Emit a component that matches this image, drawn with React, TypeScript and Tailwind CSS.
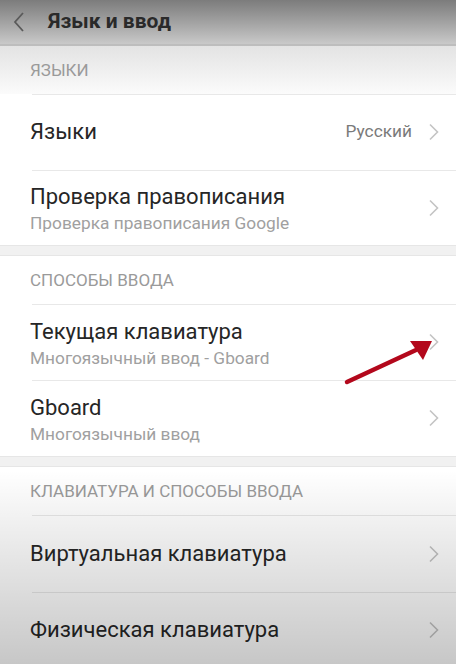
import React from "react";

const Chevron = () => (
  <svg width="12" height="18" viewBox="0 0 12 18" className="shrink-0">
    <path d="M2 1.5 L9.5 9 L2 16.5" fill="none" stroke="#c4c4c4" strokeWidth="1.6" />
  </svg>
);

type Row = { title: string; sub?: string; value?: string };

const SectionHeader = ({ label, top }: { label: string; top?: boolean }) => (
  <div
    className={`h-[48px] flex items-center pl-[30px] pt-[2px] text-[17px] text-[#9a9a9a] uppercase ${
      top ? "bg-gradient-to-b from-[#e3e3e3] to-[#fbfbfb]" : "bg-white"
    }`}
  >
    {label}
  </div>
);

const SettingRow = ({ row, h = "h-[76px]" }: { row: Row; h?: string }) => (
  <div className="relative bg-white">
    <div className="absolute top-0 left-[32px] right-0 h-px bg-[#e8e8e8]" />
    <div className={`${h} flex items-center pl-[30px] pr-[16px]`}>
      <div className={`flex-1 flex flex-col ${row.sub ? "pt-[3px]" : ""}`}>
        <span className="text-[22px] leading-[28px] text-[#262626]">{row.title}</span>
        {row.sub && (
          <span className="text-[17.3px] leading-[24px] text-[#a0a0a0]">{row.sub}</span>
        )}
      </div>
      {row.value && <span className="text-[17.3px] text-[#7a7a7a] mr-[16px]">{row.value}</span>}
      <Chevron />
    </div>
  </div>
);

const Band = () => (
  <div className="h-[11px] bg-[#f1f1f1] border-t border-b border-[#e6e6e6]" />
);

export default function App() {
  return (
    <div
      className="relative w-[456px] h-[664px] overflow-hidden bg-white"
      style={{ fontFamily: "Roboto, 'Noto Sans', sans-serif" }}
    >
      <div className="h-[44px] flex items-center bg-gradient-to-b from-[#7c7c7c] to-[#c9c9c9]">
        <svg width="14" height="22" viewBox="0 0 14 22" className="ml-[12px]">
          <path d="M11 2 L3 11 L11 20" fill="none" stroke="#5a5a5a" strokeWidth="1.8" />
        </svg>
        <span className="ml-[22px] text-[21px] font-bold text-[#2a2a2a]">Язык и ввод</span>
      </div>
      <div className="h-[2px] bg-[#bdbdbd]" />

      <SectionHeader label="Языки" top />
      <SettingRow row={{ title: "Языки", value: "Русский" }} />
      <SettingRow row={{ title: "Проверка правописания", sub: "Проверка правописания Google" }} h="h-[75px]" />
      <Band />

      <SectionHeader label="Способы ввода" />
      <SettingRow row={{ title: "Текущая клавиатура", sub: "Многоязычный ввод - Gboard" }} />
      <SettingRow row={{ title: "Gboard", sub: "Многоязычный ввод" }} />
      <Band />

      <SectionHeader label="Клавиатура и способы ввода" />
      <SettingRow row={{ title: "Виртуальная клавиатура" }} h="h-[77px]" />
      <SettingRow row={{ title: "Физическая клавиатура" }} />

      {/* bottom vignette */}
      <div className="pointer-events-none absolute left-0 right-0 top-[470px] bottom-0 bg-gradient-to-b from-transparent to-[rgba(0,0,0,0.22)]" />

      {/* red arrow */}
      <svg className="absolute left-0 top-0 pointer-events-none" width="456" height="664">
        <line x1="347" y1="382" x2="416" y2="350" stroke="#b3081c" strokeWidth="4.5" strokeLinecap="round" />
        <polygon points="432,341 410,341 423,360" fill="#b3081c" />
      </svg>
    </div>
  );
}
